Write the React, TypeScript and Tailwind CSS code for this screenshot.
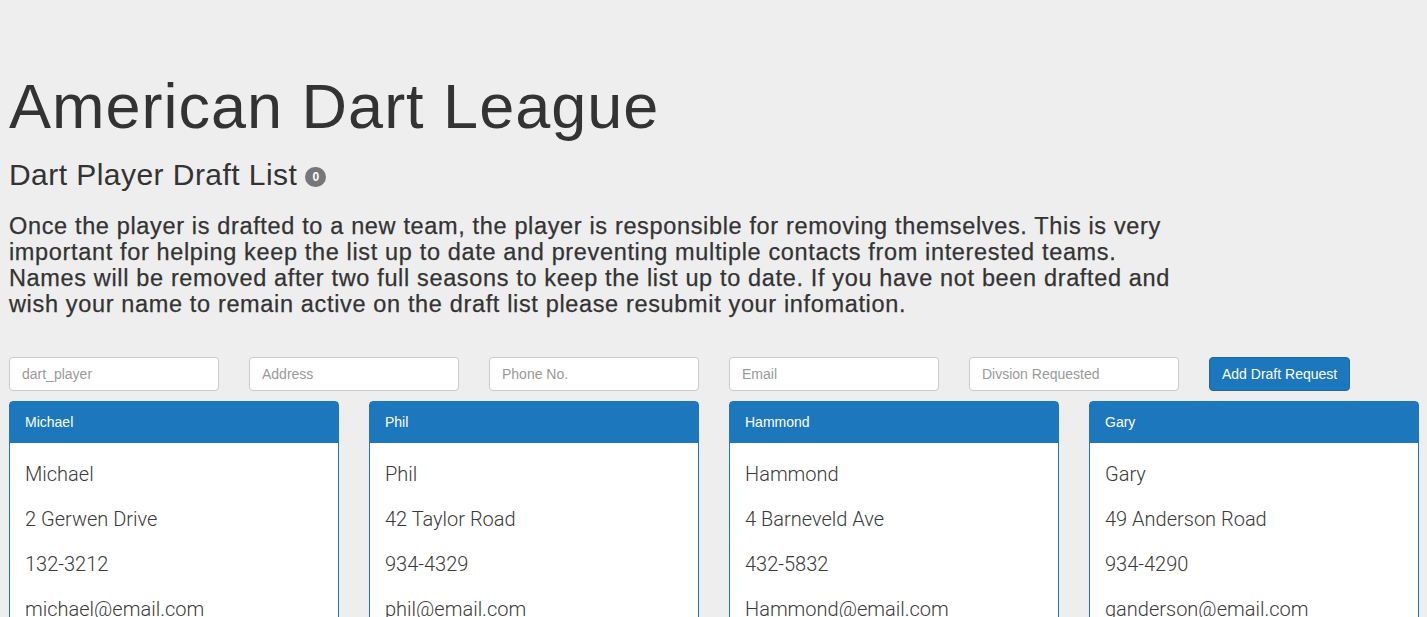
import React from "react";

const players = [
  { name: "Michael", address: "2 Gerwen Drive", phone: "132-3212", email: "michael@email.com" },
  { name: "Phil", address: "42 Taylor Road", phone: "934-4329", email: "phil@email.com" },
  { name: "Hammond", address: "4 Barneveld Ave", phone: "432-5832", email: "Hammond@email.com" },
  { name: "Gary", address: "49 Anderson Road", phone: "934-4290", email: "ganderson@email.com" },
];

const placeholders = ["dart_player", "Address", "Phone No.", "Email", "Divsion Requested"];

export default function App() {
  return (
    <div
      className="min-h-screen w-full bg-[#eeeeee] text-[#333333] overflow-hidden"
      style={{ fontFamily: '"Liberation Sans", Arial, sans-serif' }}
    >
      <div className="pl-[9px] pt-[72px]">
        <h1 className="m-0 text-[63px] leading-[1.1] font-normal tracking-[1px]">American Dart League</h1>
        <h2 className="mt-[17px] text-[30px] leading-[33px] font-normal tracking-[0.45px] flex items-center">
          Dart Player Draft List
          <span className="ml-[8px] mt-[4px] inline-flex h-[20px] min-w-[21px] items-center justify-center rounded-[10px] bg-[#777777] px-[6px] text-[12px] font-bold leading-none tracking-normal text-white">
            0
          </span>
        </h2>
        <p className="mt-[22px] max-w-[1180px] text-[23.5px] leading-[26px] tracking-[0.65px] [-webkit-text-stroke:0.25px_#333333]">
          Once the player is drafted to a new team, the player is responsible for removing themselves. This is very
          important for helping keep the list up to date and preventing multiple contacts from interested teams.
          Names will be removed after two full seasons to keep the list up to date. If you have not been drafted and
          wish your name to remain active on the draft list please resubmit your infomation.
        </p>
        <div className="mt-[40px] flex gap-[30px]">
          {placeholders.map((p) => (
            <input
              key={p}
              placeholder={p}
              className="h-[34px] w-[210px] rounded-[4px] border border-[#cccccc] bg-white px-[12px] text-[14px] text-[#555555] placeholder:text-[#999999] outline-none"
            />
          ))}
          <button className="h-[34px] rounded-[4px] bg-[#1c77bd] px-[12px] text-[14px] text-white border border-[#1a6aa8]">
            Add Draft Request
          </button>
        </div>
        <div className="mt-[10px] flex gap-[30px]">
          {players.map((pl) => (
            <div key={pl.name} className="w-[330px] shrink-0 rounded-t-[4px] border border-[#1c77bd] bg-white">
              <div className="h-[41px] bg-[#1c77bd] px-[15px] text-[14px] leading-[41px] text-white">{pl.name}</div>
              <div
                className="px-[15px] pt-[9px] text-[20px] leading-[45px] font-light text-[#3a3a3a]"
                style={{ fontFamily: 'Roboto, "Liberation Sans", sans-serif' }}
              >
                <div>{pl.name}</div>
                <div>{pl.address}</div>
                <div>{pl.phone}</div>
                <div>{pl.email}</div>
              </div>
            </div>
          ))}
        </div>
      </div>
    </div>
  );
}
